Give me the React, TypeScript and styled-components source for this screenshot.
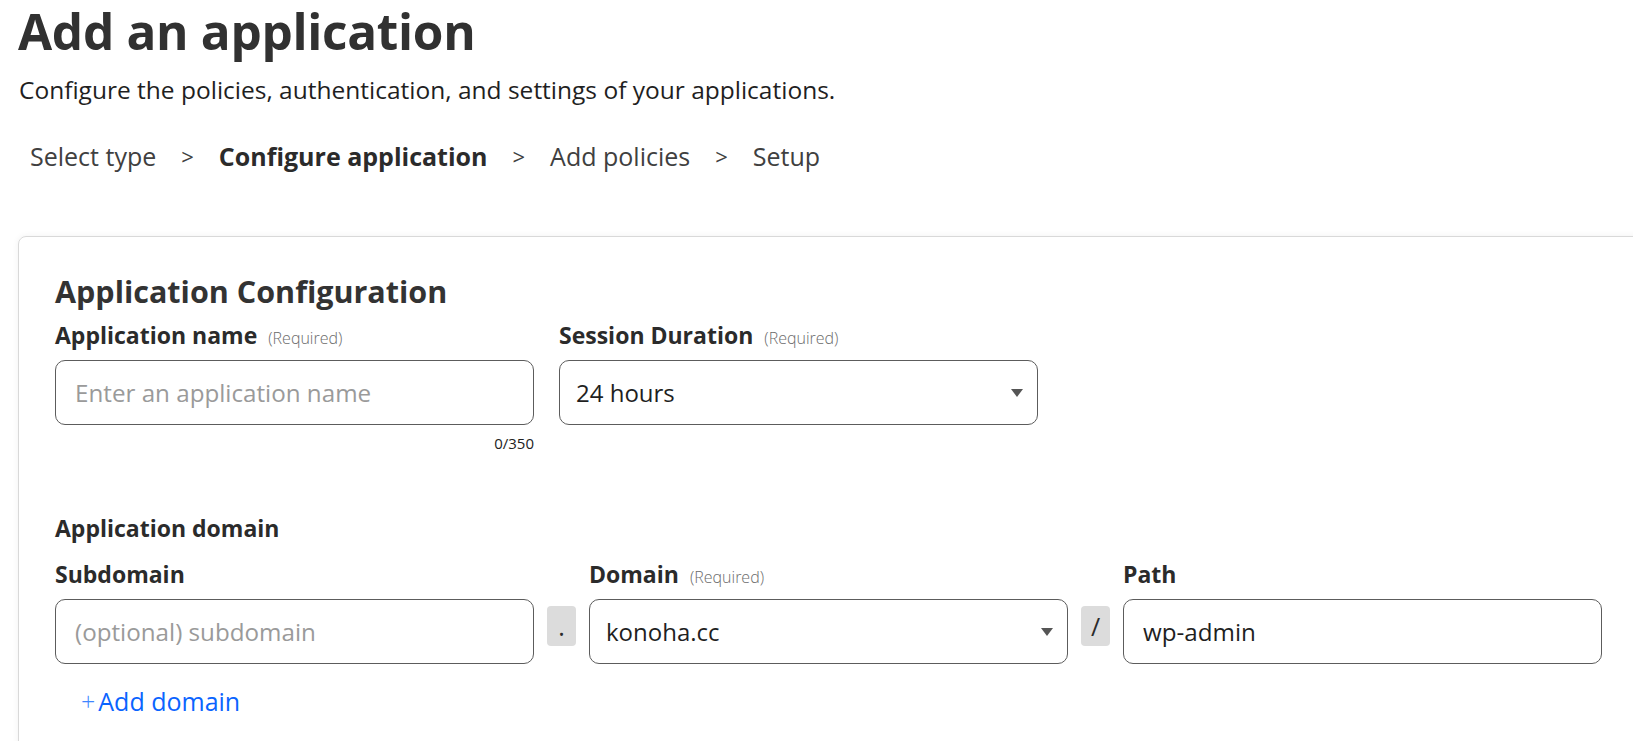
import React from 'react';
import styled, { createGlobalStyle } from 'styled-components';

const GlobalStyle = createGlobalStyle`
    html, body {
        margin: 0;
        padding: 0;
        background: #fff;
        overflow: hidden;
    }
    body {
        font-family: "Open Sans", "Noto Sans", sans-serif;
        color: #313131;
    }
`

const Page = styled.div`
    padding: 0 0 0 18px;
    width: 1633px;
    height: 741px;
    box-sizing: border-box;
    overflow: hidden;
`

const Title = styled.h1`
    margin: 0;
    font-size: 49.5px;
    line-height: 62px;
    font-weight: 700;
    color: #313131;
    letter-spacing: -0.3px;
`

const Subtitle = styled.p`
    margin: 12px 0 0 1px;
    font-size: 24.5px;
    line-height: 32px;
    color: #1f1f1f;
`

const Crumbs = styled.nav`
    display: flex;
    align-items: center;
    margin: 33px 0 0 12px;
    font-size: 25px;
    line-height: 34px;
    color: #404040;
`

const Crumb = styled.span<{ active?: boolean }>`
    font-weight: ${p => p.active ? 700 : 400};
    color: ${p => p.active ? '#2b2b2b' : '#404040'};
`

const Sep = styled.span`
    margin: 0 25px;
    font-size: 22px;
`

const Card = styled.section`
    margin: 63px -40px 0 0;
    border: 1px solid #d9d9d9;
    border-radius: 8px;
    box-shadow: 0 0 6px rgba(0, 0, 0, 0.06);
    padding: 33px 36px 40px;
    min-height: 600px;
`

const CardTitle = styled.h2`
    margin: 0;
    font-size: 30.5px;
    line-height: 42px;
    font-weight: 700;
    color: #333;
`

const FieldRow = styled.div`
    display: flex;
    gap: 25px;
    margin-top: 7px;
`

const Field = styled.div`
    display: flex;
    flex-direction: column;
    width: 479px;
`

const Label = styled.label`
    display: flex;
    align-items: baseline;
    height: 32px;
    font-size: 23px;
    line-height: 32px;
    font-weight: 700;
    color: #2b2b2b;
    margin-bottom: 9px;
`

const Required = styled.span`
    margin-left: 11px;
    font-size: 16px;
    line-height: 1;
    font-weight: 300;
    color: #6b6b6b;
`

const Input = styled.input`
    box-sizing: border-box;
    height: 65px;
    width: 100%;
    border: 1px solid #5c5c5c;
    border-radius: 10px;
    padding: 0 19px;
    font-family: inherit;
    font-size: 24.2px;
    color: #1f1f1f;
    background: #fff;
    outline: none;
    &::placeholder {
        color: #9a9a9a;
    }
`

const Select = styled.div`
    box-sizing: border-box;
    height: 65px;
    width: 100%;
    border: 1px solid #5c5c5c;
    border-radius: 10px;
    padding: 0 14px 0 16px;
    display: flex;
    align-items: center;
    justify-content: space-between;
    font-size: 24px;
    color: #1f1f1f;
`

const Caret = styled.span`
    width: 0;
    height: 0;
    border-left: 6.5px solid transparent;
    border-right: 6.5px solid transparent;
    border-top: 8px solid #555;
`

const Counter = styled.div`
    text-align: right;
    font-size: 15px;
    line-height: 20px;
    margin-top: 8px;
    color: #222;
`

const SectionTitle = styled.h3`
    margin: 59px 0 0;
    font-size: 23px;
    line-height: 32px;
    font-weight: 700;
    color: #2b2b2b;
`

const DomainGrid = styled.div`
    display: grid;
    grid-template-columns: 479px 29px 479px 29px 479px;
    column-gap: 13px;
    margin-top: 14px;
`

const Joiner = styled.div`
    align-self: start;
    margin-top: 48px;
    height: 40px;
    border-radius: 4px;
    background: #dcdcdc;
    display: flex;
    align-items: center;
    justify-content: center;
    font-size: 25px;
    color: #2b2b2b;
`

const AddLink = styled.a`
    display: inline-flex;
    align-items: center;
    gap: 3px;
    margin: 20px 0 0 26px;
    font-size: 25px;
    line-height: 34px;
    color: #0a64ff;
    text-decoration: none;
    cursor: pointer;
`

const Plus = styled.span`
    font-weight: 300;
    color: #3f86ff;
`

const steps = ['Select type', 'Configure application', 'Add policies', 'Setup'];

export default function App() {
    return (
        <Page>
            <GlobalStyle />
            <Title>Add an application</Title>
            <Subtitle>Configure the policies, authentication, and settings of your applications.</Subtitle>

            <Crumbs>
                {steps.map((step, index) => (
                    <React.Fragment key={step}>
                        {index > 0 && <Sep>&gt;</Sep>}
                        <Crumb active={index === 1}>{step}</Crumb>
                    </React.Fragment>
                ))}
            </Crumbs>

            <Card>
                <CardTitle>Application Configuration</CardTitle>
                <FieldRow>
                    <Field>
                        <Label>Application name <Required>(Required)</Required></Label>
                        <Input placeholder="Enter an application name" />
                        <Counter>0/350</Counter>
                    </Field>
                    <Field>
                        <Label>Session Duration <Required>(Required)</Required></Label>
                        <Select>
                            24 hours
                            <Caret />
                        </Select>
                    </Field>
                </FieldRow>

                <SectionTitle>Application domain</SectionTitle>
                <DomainGrid>
                    <Field>
                        <Label>Subdomain</Label>
                        <Input placeholder="(optional) subdomain" />
                    </Field>
                    <Joiner>.</Joiner>
                    <Field>
                        <Label>Domain <Required>(Required)</Required></Label>
                        <Select>
                            konoha.cc
                            <Caret />
                        </Select>
                    </Field>
                    <Joiner>/</Joiner>
                    <Field>
                        <Label>Path</Label>
                        <Input defaultValue="wp-admin" />
                    </Field>
                </DomainGrid>
                <AddLink><Plus>+</Plus>Add domain</AddLink>
            </Card>
        </Page>
    );
}
